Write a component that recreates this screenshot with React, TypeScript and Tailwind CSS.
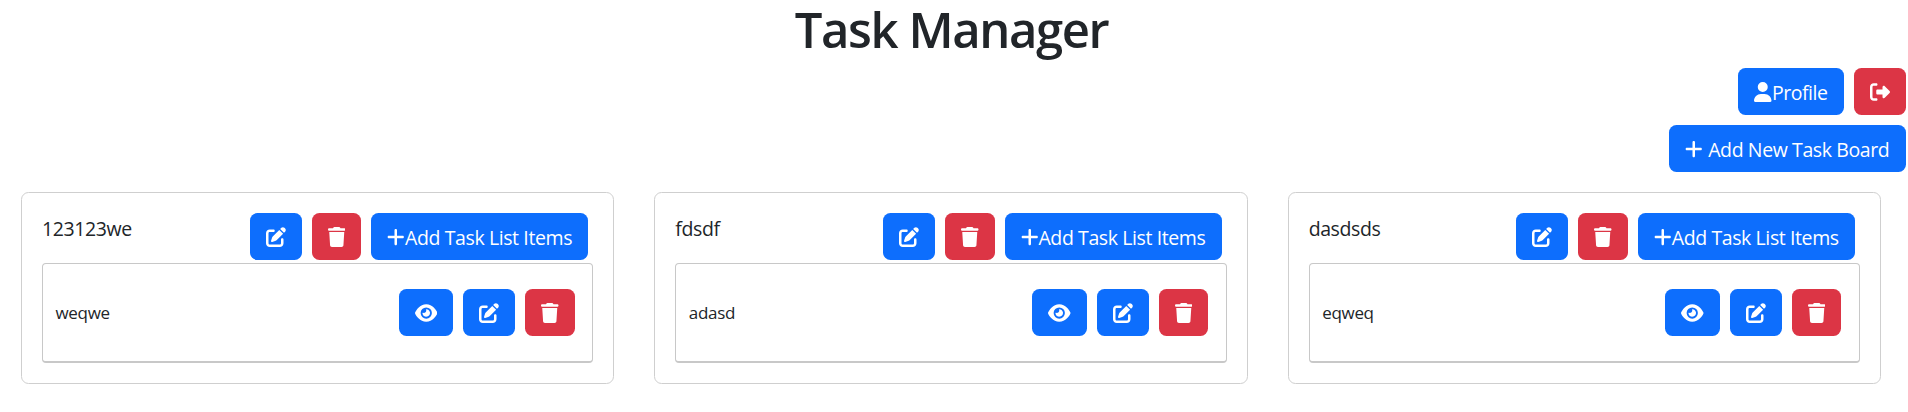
import type { ReactNode } from "react";
import { FaEye, FaPenToSquare, FaPlus, FaRightFromBracket, FaTrash, FaUser } from "react-icons/fa6";

type Board = { title: string; items: string[] };

const boards: Board[] = [
  { title: "123123we", items: ["weqwe"] },
  { title: "fdsdf", items: ["adasd"] },
  { title: "dasdsds", items: ["eqweq"] },
];

function Button({ tone = "primary", label, children }: { tone?: "primary" | "danger"; label: string; children: ReactNode }) {
  const color = tone === "primary" ? "bg-[#0d6efd]" : "bg-[#dc3545]";
  return (
    <button
      aria-label={label}
      className={`${color} flex h-[47px] shrink-0 items-center rounded-[7.5px] px-4 text-[19.5px] whitespace-nowrap text-white`}
    >
      {children}
    </button>
  );
}

function EditButton() {
  return (
    <Button label="Edit">
      <FaPenToSquare className="size-5" />
    </Button>
  );
}

function DeleteButton() {
  return (
    <Button tone="danger" label="Delete">
      <FaTrash className="h-5 w-[17.5px]" />
    </Button>
  );
}

function BoardCard({ board }: { board: Board }) {
  return (
    <section className="h-[192px] rounded-[7.5px] border border-[#cfcfcf] px-5 pt-5">
      <header className="flex h-[50px] items-start justify-between pr-[5px]">
        <h2 className="pt-px text-[19.5px] leading-[30px] tracking-[-0.4px]">{board.title}</h2>
        <div className="flex gap-[10px]">
          <EditButton />
          <DeleteButton />
          <Button label="Add Task List Items">
            <FaPlus className="h-5 w-[17.5px]" />
            <span className="w-[167.5px] pt-[3px] tracking-[-0.4px]">Add Task List Items</span>
          </Button>
        </div>
      </header>
      {board.items.map((item) => (
        <div
          key={item}
          className="flex h-[100px] items-center justify-between rounded-[4px] border border-b-2 border-[#c8c8c8] pr-[17.5px] pl-[12.5px]"
        >
          <span className="text-[17px] tracking-[-0.3px]">{item}</span>
          <div className="flex gap-[10px]">
            <Button label="View">
              <FaEye className="h-5 w-[22.5px]" />
            </Button>
            <EditButton />
            <DeleteButton />
          </div>
        </div>
      ))}
    </section>
  );
}

export default function App() {
  return (
    <main className="h-[412px] bg-white font-['Open_Sans','Noto_Sans',sans-serif] text-[#212529]">
      <h1 className="h-[68px] pr-[5px] text-center text-[49px] leading-[58px] font-semibold tracking-[-1.4px]">Task Manager</h1>
      <nav className="flex flex-col items-end gap-[10px] pr-[2px]">
        <div className="flex gap-[10px]">
          <Button label="Profile">
            <FaUser className="h-5 w-[17.5px]" />
            <span className="w-[56.5px] pt-[3px] tracking-[-0.5px]">Profile</span>
          </Button>
          <Button tone="danger" label="Log out">
            <FaRightFromBracket className="size-5" />
          </Button>
        </div>
        <Button label="Add New Task Board">
          <FaPlus className="h-5 w-[17.5px]" />
          <span className="ml-[5px] w-[182.5px] pt-[3px] tracking-[-0.4px]">Add New Task Board</span>
        </Button>
      </nav>
      <div className="mt-5 mr-[27px] ml-[21px] grid grid-cols-3 gap-10">
        {boards.map((board) => (
          <BoardCard key={board.title} board={board} />
        ))}
      </div>
    </main>
  );
}
